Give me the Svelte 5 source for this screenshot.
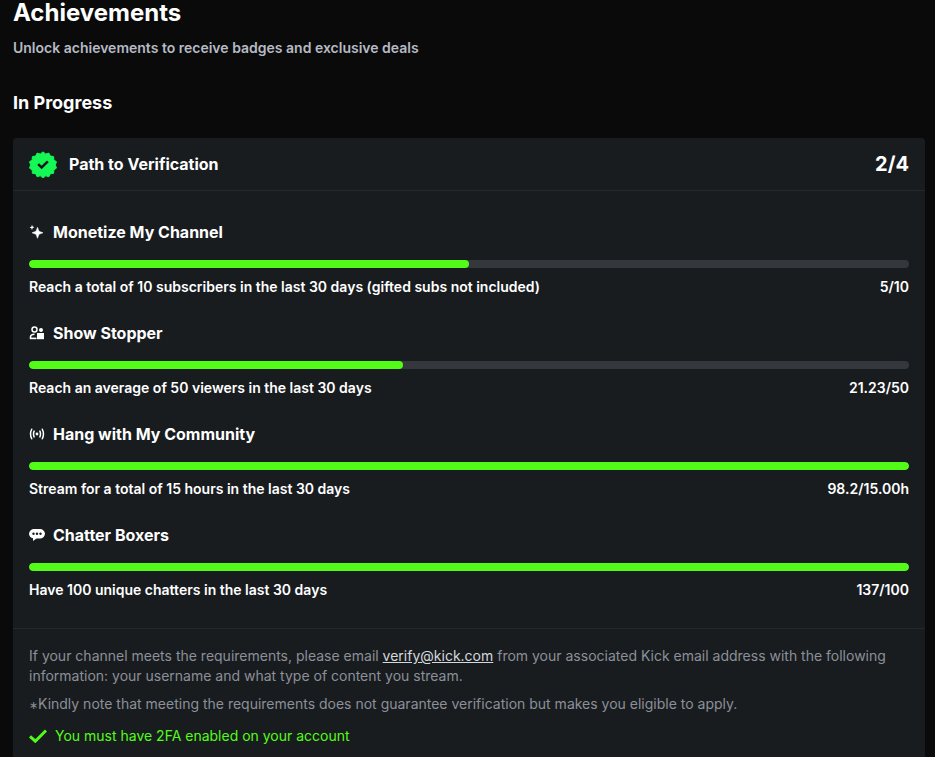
<script>
  const items = [
    { title: 'Monetize My Channel', icon: 'spark', pct: 50, desc: 'Reach a total of 10 subscribers in the last 30 days (gifted subs not included)', val: '5/10' },
    { title: 'Show Stopper', icon: 'user', pct: 42.5, desc: 'Reach an average of 50 viewers in the last 30 days', val: '21.23/50' },
    { title: 'Hang with My Community', icon: 'live', pct: 100, desc: 'Stream for a total of 15 hours in the last 30 days', val: '98.2/15.00h' },
    { title: 'Chatter Boxers', icon: 'chat', pct: 100, desc: 'Have 100 unique chatters in the last 30 days', val: '137/100' }
  ];
</script>

<main class="page">
  <h1>Achievements</h1>
  <p class="sub">Unlock achievements to receive badges and exclusive deals</p>
  <h2>In Progress</h2>
  <section class="card">
    <header class="head">
      <div class="head-left">
        <svg class="badge" width="28" height="28" viewBox="0 0 30 30">
          <path fill="#14f755" stroke="#14f755" stroke-width="1" stroke-linejoin="round" d="M15 2l2.900 2.300 3.400-1 1.600 3.200 3.500.5.200 3.600 2.900 2-1.300 3.400 1.300 3.400-2.900 2-.2 3.600-3.500.5-1.600 3.200-3.400-1-2.900 2.300-2.900-2.300-3.400 1-1.600-3.200-3.500-.5-.2-3.600-2.900-2 1.300-3.400-1.300-3.400 2.900-2 .2-3.600 3.500-.5 1.600-3.200 3.400 1z"/>
          <path fill="none" stroke="#14181c" stroke-width="2.600" d="M9.800 15.200l3.700 3.500 6.700-6.500"/>
        </svg>
        <span class="head-title">Path to Verification</span>
      </div>
      <span class="head-count">2/4</span>
    </header>
    <div class="list">
      {#each items as it}
        <div class="item">
          <div class="item-title">
            <svg class="ico" width="16" height="16" viewBox="0 0 16 16" fill="#fff">
              {#if it.icon === 'spark'}
                <path d="M8.500 3.300l1.500 4 4 1.500-4 1.500-1.500 4-1.500-4-4-1.500 4-1.500z" stroke="#fff" stroke-width=".5"/>
                <path d="M3 .8l.7 1.800 1.800.7-1.800.7L3 6l-.7-1.800-1.800-.7 1.800-.7z"/>
              {:else if it.icon === 'user'}
                <circle cx="5.500" cy="4.500" r="2.500" fill="none" stroke="#fff" stroke-width="1.500"/>
                <path d="M1.500 14v-2c0-1.800 1.500-2.800 4-2.800" fill="none" stroke="#fff" stroke-width="1.500"/>
                <path d="M1 12.600h6.500v1.600H1z"/>
                <circle cx="12" cy="5" r="2"/>
                <path d="M8 8h7v6.200H8z"/>
              {:else if it.icon === 'live'}
                <circle cx="8" cy="8" r="1.400"/>
                <path d="M5.100 5.100q-1.200 2.900 0 5.800M10.900 5.100q1.200 2.900 0 5.800M2.700 3.200q-2.300 4.800 0 9.600M13.300 3.200q2.300 4.800 0 9.600" fill="none" stroke="#fff" stroke-width="1.500" stroke-linecap="round"/>
              {:else}
                <path d="M5 2h6a5 5 0 0 1 5 4.800a5 5 0 0 1-5 4.700H7.500l-3.500 2.500v-2.700A5 5 0 0 1 0 6.800A5 5 0 0 1 5 2z"/>
                <circle cx="4.500" cy="6.800" r="1.200" fill="#191c1f"/><circle cx="8" cy="6.800" r="1.200" fill="#191c1f"/><circle cx="11.500" cy="6.800" r="1.200" fill="#191c1f"/>
              {/if}
            </svg>
            <span>{it.title}</span>
          </div>
          <div class="track"><div class="fill" style="width:{it.pct}%"></div></div>
          <div class="row"><span>{it.desc}</span><span>{it.val}</span></div>
        </div>
      {/each}
    </div>
    <footer class="foot">
      <p>If your channel meets the requirements, please email <a href="#top">verify@kick.com</a> from your associated Kick email address with the following information: your username and what type of content you stream.</p>
      <p class="note"><span class="ast">∗</span>Kindly note that meeting the requirements does not guarantee verification but makes you eligible to apply.</p>
      <div class="twofa">
        <svg width="18" height="14" viewBox="0 0 18 14"><path d="M1 7.300l5.300 4.900L17 1.500" fill="none" stroke="#53fc18" stroke-width="3"/></svg>
        <span>You must have 2FA enabled on your account</span>
      </div>
    </footer>
  </section>
</main>

<style>
  :global(body) { margin: 0; background: #0a0a0b; }
  .page { height: 757px; box-sizing: border-box; overflow: hidden; padding: 0 10px 0 13px; font-family: Inter, "Liberation Sans", sans-serif; color: #fff; }
  h1 { margin: 0; font-size: 24px; line-height: 26px; font-weight: 700; }
  .sub { margin: 12px 0 0; font-size: 14px; line-height: 20px; font-weight: 600; color: #b6bac3; }
  h2 { margin: 33px 0 0; font-size: 18px; line-height: 24px; font-weight: 700; }
  .card { margin-top: 23px; background: #191c1f; border-radius: 4px; }
  .head { display: flex; justify-content: space-between; align-items: center; height: 52px; padding: 0 16px; border-bottom: 1px solid #24272c; }
  .head-left { display: flex; align-items: center; gap: 12px; }
  .badge { display: block; }
  .head-title { font-size: 16px; font-weight: 700; }
  .head-count { font-size: 20px; font-weight: 700; }
  .list { padding: 29px 16px 28px; display: flex; flex-direction: column; gap: 24px; }
  .item-title { display: flex; align-items: center; gap: 8px; font-size: 16px; line-height: 24px; font-weight: 700; }
  .ico { display: block; }
  .track { height: 8px; margin-top: 16px; border-radius: 4px; background: #34373c; overflow: hidden; }
  .fill { height: 100%; border-radius: 4px; background: #53fc18; }
  .row { display: flex; justify-content: space-between; margin-top: 9px; font-size: 14px; line-height: 20px; font-weight: 600; }
  .foot { border-top: 1px solid #24272c; padding: 17px 16px 16px; font-size: 14px; line-height: 20px; color: #8b9099; }
  .foot p { margin: 0; }
  .foot .note { margin-top: 8px; }
  .foot .ast { font-size: 10.5px; line-height: 0; }
  .foot a { color: #d5d8dc; text-decoration: underline; }
  .twofa { display: flex; align-items: center; gap: 8px; margin-top: 12px; color: #53fc18; }
</style>
